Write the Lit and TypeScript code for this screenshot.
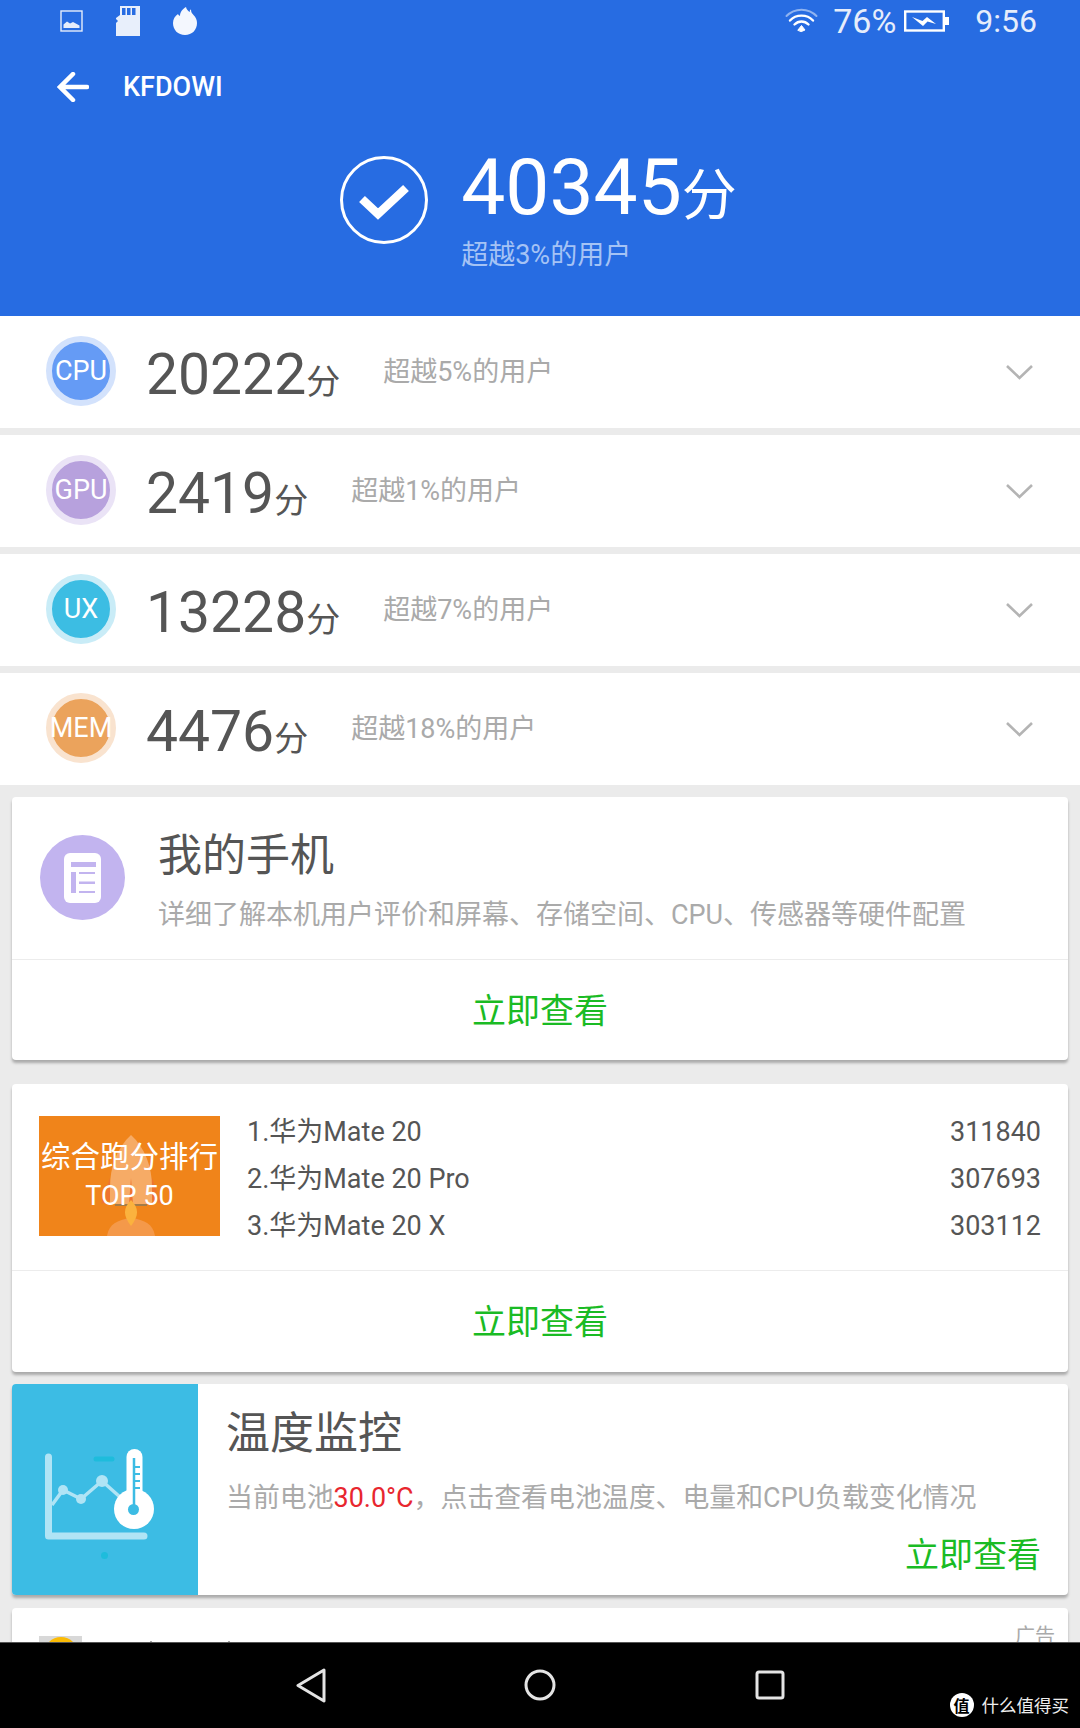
import { LitElement, css, html, svg } from "lit";
import { customElement } from "lit/decorators.js";

const rows = [
  { tag: "CPU", score: "20222", beat: "超越5%的用户", fill: "#659bf5", ring: "#d3e2fc" },
  { tag: "GPU", score: "2419", beat: "超越1%的用户", fill: "#b7a1dd", ring: "#eae3f6" },
  { tag: "UX", score: "13228", beat: "超越7%的用户", fill: "#3cbde3", ring: "#c9ecf7" },
  { tag: "MEM", score: "4476", beat: "超越18%的用户", fill: "#eba35c", ring: "#f9e3cf" },
];

const ranks = [
  { name: "1.华为Mate 20", score: "311840" },
  { name: "2.华为Mate 20 Pro", score: "307693" },
  { name: "3.华为Mate 20 X", score: "303112" },
];

const chevron = svg`<path d="M2 2 L14.5 14 L27 2" fill="none" stroke="#b4b4b4" stroke-width="2.6" />`;

@customElement("app-root")
export class AppRoot extends LitElement {
  static styles = css`
    :host {
      display: flex;
      flex-direction: column;
      width: 1080px;
      height: 1728px;
      overflow: hidden;
      background: #ebebeb;
      font-family: Roboto, "Noto Sans CJK SC", sans-serif;
      color: #555;
    }
    svg {
      display: block;
      flex: none;
    }
    .page {
      flex: 1;
      min-height: 0;
      overflow: hidden;
    }

    /* blue header */
    .header {
      height: 316px;
      background: #276ce2;
      color: #fff;
      box-sizing: border-box;
    }
    .status {
      display: flex;
      align-items: center;
      height: 42px;
      padding: 0 43px 0 60px;
    }
    .status .left {
      display: flex;
      align-items: center;
      gap: 33px;
    }
    .status .right {
      display: flex;
      align-items: center;
      margin-left: auto;
      font-size: 34px;
      color: #e6edfb;
    }
    .pct {
      margin: 0 8px 0 15px;
    }
    .time {
      margin-left: 26px;
      font-size: 32px;
    }
    .toolbar {
      display: flex;
      align-items: center;
      height: 90px;
      padding-left: 57px;
      gap: 34px;
      font-size: 27px;
      font-weight: 500;
    }
    .hero {
      display: flex;
      justify-content: center;
      padding: 9px 3px 0 0;
      gap: 33px;
    }
    .hero .check {
      margin-top: 15px;
    }
    .hero .total {
      font-size: 78.5px;
      line-height: 92px;
    }
    .hero .unit {
      font-size: 55px;
      line-height: 1;
    }
    .hero .beat {
      margin-top: 4px;
      font-size: 27px;
      line-height: 36px;
      color: #a5c3f5;
    }

    /* score rows */
    .row {
      display: flex;
      align-items: center;
      height: 112px;
      margin-bottom: 7px;
      padding-left: 46px;
      background: #fff;
    }
    .badge {
      display: flex;
      align-items: center;
      justify-content: center;
      box-sizing: border-box;
      width: 70px;
      height: 70px;
      border-radius: 50%;
      border-width: 6px;
      border-style: solid;
      color: #fff;
      font-size: 27px;
      margin: 0 30px 2px 0;
      white-space: nowrap;
    }
    .score {
      font-size: 57px;
      color: #555;
      margin-top: 4px;
    }
    .unit-small {
      font-size: 34px;
    }
    .row .beat {
      margin: 0 0 6px 43px;
      font-size: 27px;
      color: #aaa;
    }
    .row svg {
      margin-left: auto;
      margin-right: 46px;
    }

    /* cards */
    .card {
      margin: 0 12px;
      background: #fff;
      border-radius: 4px;
      box-shadow: 0 3px 3px rgba(0, 0, 0, 0.28);
      overflow: hidden;
    }
    .action {
      display: flex;
      align-items: center;
      justify-content: center;
      border-top: 1px solid #ececec;
      color: #1abb24;
      font-size: 34px;
      padding-bottom: 4px;
    }
    .phone {
      height: 263px;
      margin-top: 12px;
      margin-bottom: 24px;
      display: flex;
      flex-direction: column;
    }
    .phone .body {
      display: flex;
      height: 162px;
      padding-left: 28px;
      gap: 33px;
    }
    .phone .body svg {
      margin-top: 38px;
    }
    .phone .action {
      flex: 1;
    }
    .title {
      font-size: 44px;
      line-height: 60px;
      color: #555;
    }
    .desc {
      font-size: 27px;
      line-height: 40px;
      color: #aaa;
    }
    .phone .text {
      padding-top: 29px;
    }
    .phone .desc {
      margin-top: 9px;
    }

    .rank {
      height: 288px;
      margin-bottom: 12px;
      display: flex;
      flex-direction: column;
    }
    .rank .body {
      display: flex;
      height: 186px;
      padding: 25px 27px 0 27px;
      box-sizing: border-box;
      gap: 27px;
    }
    .rank .action {
      flex: 1;
    }
    .poster {
      position: relative;
      flex: none;
      width: 181px;
      height: 120px;
      margin-top: 7px;
      background: #f0841a;
      color: #fff;
      overflow: hidden;
      text-align: center;
    }
    .poster svg {
      position: absolute;
      left: 0;
      top: 0;
    }
    .poster .line1,
    .poster .line2 {
      position: relative;
    }
    .poster .line1 {
      font-size: 29.5px;
      line-height: 40px;
      margin-top: 21px;
      white-space: nowrap;
    }
    .poster .line2 {
      font-size: 27px;
      line-height: 38px;
    }
    .list {
      flex: 1;
      font-size: 27px;
      line-height: 47px;
      color: #555;
    }
    .list div {
      display: flex;
      justify-content: space-between;
    }

    .temp {
      height: 211px;
      margin-bottom: 13px;
      display: flex;
    }
    .temp .panel {
      flex: none;
      width: 186px;
      box-sizing: border-box;
      padding: 47px 0 0 18px;
      background: #3cbce4;
    }
    .temp .text {
      flex: 1;
      padding: 20px 27px 0 28px;
    }
    .temp .desc {
      margin-top: 14px;
      font-size: 26.9px;
    }
    .temp .hot {
      color: #e8262e;
    }
    .temp .go {
      margin-top: 15px;
      text-align: right;
      color: #1abb24;
      font-size: 34px;
      line-height: 44px;
    }

    .ad {
      display: flex;
      height: 100px;
      padding: 28px 13px 0 27px;
      box-sizing: border-box;
    }
    .ad .thumb {
      width: 43px;
      height: 43px;
      background: #d8d8d8;
      overflow: hidden;
    }
    .ad .thumb i {
      display: block;
      width: 34px;
      height: 34px;
      margin: 1px auto 0;
      border-radius: 50%;
      background: #fbbb05;
    }
    .ad .marks {
      margin: 5px 0 0 50px;
    }
    .ad .label {
      margin-left: auto;
      font-size: 20px;
      line-height: 20px;
      margin-top: -10px;
      color: #aaa;
    }

    /* android nav */
    .nav {
      position: relative;
      flex: none;
      height: 86px;
      background: #000;
      border-top: 1px solid #555;
      box-sizing: border-box;
      display: flex;
      justify-content: center;
      align-items: flex-start;
      padding: 25px 0 0 10px;
    }
    .nav .back {
      margin: 0 198px 0 -9px;
    }
    .nav .home {
      margin: 1px 199px 0 0;
    }
    .nav .recent {
      margin-top: 2px;
    }
    .mark {
      position: absolute;
      right: 11px;
      bottom: 11px;
      display: flex;
      align-items: center;
      gap: 8px;
      font-size: 17.5px;
      color: #eee;
    }
    .mark i {
      display: flex;
      align-items: center;
      justify-content: center;
      width: 24px;
      height: 24px;
      border-radius: 50%;
      background: #fff;
      color: #000;
      font-size: 16px;
      font-style: normal;
      font-weight: 700;
    }
  `;

  private statusLeft() {
    return html`
      <div class="left">
        <svg width="23" height="22" viewBox="0 0 23 22">
          <rect x="1" y="1" width="21" height="20" fill="none" stroke="#e6edfb" stroke-width="1.4" />
          <path d="M3.5 18 V14.5 L7 11.5 L10 13.5 L13 12 L19.5 15.5 V18 Z" fill="#e6edfb" />
        </svg>
        <svg width="24" height="30" viewBox="0 0 24 30">
          <path d="M4 0 H24 V30 H0 V17 L2 15 L0 13 V12 L4 9 Z" fill="#e8effb" />
          <path d="M6 2 H9.5 V9 H6 Z M11 2 H14.5 V9 H11 Z M16 2 H19.5 V9 H16 Z" fill="#276ce2" />
        </svg>
        <svg width="24" height="28" viewBox="0 0 24 28">
          <path d="M13 0 C13.5 2.500 15 4 17 5 C16.500 3.500 17 2.800 18 2.500 C18 5 19 6.500 20.500 8 C22.800 10 24 13 24 16 C24 23 19 28 12 28 C5 28 0 23 0 16 C0 12 2 9 5 7 C5.500 8 6 8.500 7 9 C7 5 9.500 2 13 0 Z" fill="#f4f7fe" />
        </svg>
      </div>
    `;
  }

  private statusRight() {
    return html`
      <div class="right">
        <svg width="33" height="26" viewBox="0 0 33 26" fill="none" stroke-linecap="round">
          <path d="M1.5 8 C9.5 -0.5 23.5 -0.5 31.5 8" stroke="#8fb3f0" stroke-width="2" />
          <path d="M5 12.5 C11 6 22 6 28 12.5" stroke="#fff" stroke-width="2.4" />
          <path d="M9.5 16.5 C13.5 12.5 19.5 12.5 23.5 16.5" stroke="#fff" stroke-width="2.4" />
          <path d="M13 22 L16.5 17.5 L20 22 L16.5 23.5 Z" fill="#fff" stroke="#fff" stroke-width="1" />
        </svg>
        <span class="pct">76%</span>
        <svg width="45" height="22" viewBox="0 0 45 22">
          <rect x="1.2" y="1.5" width="38.6" height="19" fill="none" stroke="#fff" stroke-width="2.4" />
          <rect x="41" y="7" width="4" height="8" fill="#fff" />
          <path d="M8 7 L18.5 11 L23 7 L32 14 L23.5 11.5 L19 16 Z" fill="#fff" />
        </svg>
        <span class="time">9:56</span>
      </div>
    `;
  }

  private hero() {
    return html`
      <div class="hero">
        <svg class="check" width="88" height="88" viewBox="0 0 88 88" fill="none" stroke="#fff">
          <circle cx="44" cy="44" r="42.5" stroke-width="3" />
          <path d="M22 43 L38 58 L66 32" stroke-width="8.5" />
        </svg>
        <div>
          <div class="total">40345<span class="unit">分</span></div>
          <div class="beat">超越3%的用户</div>
        </div>
      </div>
    `;
  }

  private posterArt() {
    return html`
      <svg width="181" height="120" viewBox="0 0 181 120">
        <path d="M92 19 C78 32 71 50 71 72 L71 88 L113 88 L113 72 C113 50 106 32 92 19 Z" fill="#f6ab66" />
        <path d="M71 62 L62 88 L71 84 Z M113 62 L122 88 L113 84 Z" fill="#ee7430" />
        <path d="M92 62 L90 88 H94 Z" fill="#ee7430" />
        <path d="M76 89 H108" stroke="#8a7a5a" stroke-width="1.500" />
        <path d="M68 120 C70 108 78 104 92 102 C106 104 114 108 116 120 Z" fill="#f4994a" />
        <path d="M92 84 C84 92 84 100 92 110 C100 100 100 92 92 84 Z" fill="#fbb23e" />
      </svg>
    `;
  }

  private tempArt() {
    return html`
      <svg width="140" height="140" viewBox="0 0 140 140" fill="none">
        <path d="M18.5 26 V105 H114" stroke="#b0e4f5" stroke-width="7" stroke-linecap="round" stroke-linejoin="round" />
        <path d="M22 74 L33 59 L51 68 L72 50 L90 66" stroke="#b0e4f5" stroke-width="3.5" />
        <circle cx="33" cy="59" r="5" fill="#b0e4f5" />
        <circle cx="51" cy="68" r="5" fill="#b0e4f5" />
        <circle cx="72" cy="50" r="6" fill="#b0e4f5" />
        <path d="M66 28 H82" stroke="#1ebcdc" stroke-width="5" stroke-linecap="round" />
        <circle cx="74.500" cy="124.500" r="3.500" fill="#1ebcdc" />
        <path d="M96.500 70 V26 A8 8 0 0 1 112.500 26 V70 Z" fill="#fff" />
        <circle cx="104" cy="78" r="20" fill="#fff" />
        <path d="M104 27 V78" stroke="#3cbce4" stroke-width="2.500" />
        <path d="M104 36 H110 M104 43 H110 M104 50 H110 M104 57 H110" stroke="#3cbce4" stroke-width="2" />
        <circle cx="103.500" cy="78.500" r="5.500" fill="#3cbce4" />
      </svg>
    `;
  }

  render() {
    return html`
      <div class="page">
        <div class="header">
          <div class="status">${this.statusLeft()} ${this.statusRight()}</div>
          <div class="toolbar">
            <svg width="32" height="30" viewBox="0 0 32 30" fill="none" stroke="#fff" stroke-width="4.500" stroke-linecap="round">
              <path d="M16 2 L3 15 L16 28 M4 15 H30" />
            </svg>
            <span>KFDOWI</span>
          </div>
          ${this.hero()}
        </div>

        ${rows.map(
          (r) => html`
            <div class="row">
              <div class="badge" style="background:${r.fill};border-color:${r.ring}">${r.tag}</div>
              <span class="score">${r.score}<span class="unit-small">分</span></span>
              <span class="beat">${r.beat}</span>
              <svg width="29" height="16" viewBox="0 0 29 16">${chevron}</svg>
            </div>
          `,
        )}

        <div class="card phone">
          <div class="body">
            <svg width="85" height="85" viewBox="0 0 85 85">
              <circle cx="42.500" cy="42.500" r="42.500" fill="#c2b4ef" />
              <rect x="24" y="18" width="37" height="50" rx="6" fill="#fff" />
              <path d="M31 27 H56 V32 H31 Z M31 37 H36 V58 H31 Z M39 37 H55 V39 H39 Z M39 46.500 H55 V49 H39 Z M39 56 H55 V58 H39 Z" fill="#c2b4ef" />
            </svg>
            <div class="text">
              <div class="title">我的手机</div>
              <div class="desc">详细了解本机用户评价和屏幕、存储空间、CPU、传感器等硬件配置</div>
            </div>
          </div>
          <div class="action">立即查看</div>
        </div>

        <div class="card rank">
          <div class="body">
            <div class="poster">
              ${this.posterArt()}
              <div class="line1">综合跑分排行</div>
              <div class="line2">TOP 50</div>
            </div>
            <div class="list">
              ${ranks.map((r) => html`<div><span>${r.name}</span><span>${r.score}</span></div>`)}
            </div>
          </div>
          <div class="action">立即查看</div>
        </div>

        <div class="card temp">
          <div class="panel">${this.tempArt()}</div>
          <div class="text">
            <div class="title">温度监控</div>
            <div class="desc">当前电池<span class="hot">30.0°C</span>，点击查看电池温度、电量和CPU负载变化情况</div>
            <div class="go">立即查看</div>
          </div>
        </div>

        <div class="card ad">
          <div class="thumb"><i></i></div>
          <svg class="marks" width="170" height="4" viewBox="0 0 170 4">
            <path d="M4 1 V4 M19 0 V4 M62 1 V4 M97 0 V4 M166 1 V4" stroke="#888" stroke-width="1.500" />
          </svg>
          <span class="label">广告</span>
        </div>
      </div>

      <div class="nav">
        <svg class="back" width="30" height="36" viewBox="0 0 30 36" fill="none" stroke="#e4e4e4" stroke-width="3" stroke-linejoin="round">
          <path d="M28 2 L2 17.500 L28 33 Z" />
        </svg>
        <svg class="home" width="32" height="32" viewBox="0 0 32 32" fill="none" stroke="#e4e4e4" stroke-width="3">
          <circle cx="16" cy="16" r="14" />
        </svg>
        <svg class="recent" width="30" height="30" viewBox="0 0 30 30" fill="none" stroke="#e4e4e4" stroke-width="3" stroke-linejoin="round">
          <rect x="2" y="2" width="26" height="26" rx="2" />
        </svg>
        <div class="mark"><i>值</i><span>什么值得买</span></div>
      </div>
    `;
  }
}
